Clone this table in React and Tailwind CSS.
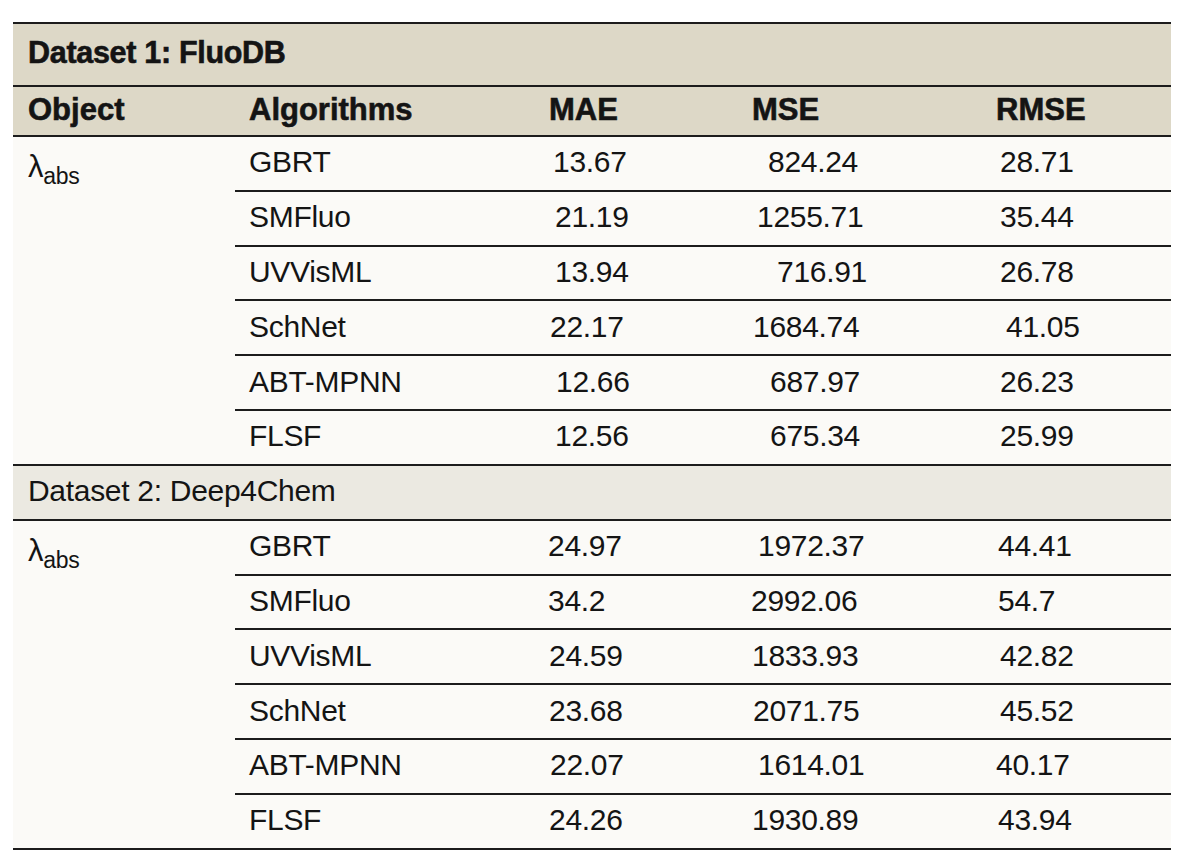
import React from "react";

const ds1 = [
  ["GBRT", "13.67", "pl-[19px]", "824.24", "pl-[30px]", "28.71", "pl-[18px]"],
  ["SMFluo", "21.19", "pl-[21px]", "1255.71", "pl-[19px]", "35.44", "pl-[18px]"],
  ["UVVisML", "13.94", "pl-[21px]", "716.91", "pl-[39px]", "26.78", "pl-[18px]"],
  ["SchNet", "22.17", "pl-[16px]", "1684.74", "pl-[15px]", "41.05", "pl-[24px]"],
  ["ABT-MPNN", "12.66", "pl-[22px]", "687.97", "pl-[32px]", "26.23", "pl-[18px]"],
  ["FLSF", "12.56", "pl-[21px]", "675.34", "pl-[32px]", "25.99", "pl-[18px]"],
];

const ds2 = [
  ["GBRT", "24.97", "pl-[14px]", "1972.37", "pl-[20px]", "44.41", "pl-[16px]"],
  ["SMFluo", "34.2", "pl-[14px]", "2992.06", "pl-[13px]", "54.7", "pl-[16px]"],
  ["UVVisML", "24.59", "pl-[15px]", "1833.93", "pl-[14px]", "42.82", "pl-[18px]"],
  ["SchNet", "23.68", "pl-[15px]", "2071.75", "pl-[15px]", "45.52", "pl-[18px]"],
  ["ABT-MPNN", "22.07", "pl-[16px]", "1614.01", "pl-[20px]", "40.17", "pl-[14px]"],
  ["FLSF", "24.26", "pl-[15px]", "1930.89", "pl-[14px]", "43.94", "pl-[16px]"],
];

function Lambda() {
  return (
    <span className="inline-flex items-baseline">
      <span className="text-[31px]">λ</span>
      <span className="relative top-[7px] text-[23px]">abs</span>
    </span>
  );
}

function Block({ rows }) {
  return (
    <div className="flex border-b-2 border-[#1c1c1c]">
      <div className="w-[222px] shrink-0 pl-[15px] pt-[14px]">
        <Lambda />
      </div>
      <div className="flex-1 flex flex-col">
        {rows.map((r, i) => (
          <div
            key={r[0]}
            className={
              "flex items-center pb-[2px] " +
              (i < rows.length - 1 ? "h-[54.8px] border-b-2 border-[#1c1c1c]" : "h-[52.8px]")
            }
          >
            <div className="w-[299px] shrink-0 pl-[14px]">{r[0]}</div>
            <div className={"w-[204px] shrink-0 " + r[2]}>{r[1]}</div>
            <div className={"w-[244px] shrink-0 " + r[4]}>{r[3]}</div>
            <div className={"flex-1 " + r[6]}>{r[5]}</div>
          </div>
        ))}
      </div>
    </div>
  );
}

export default function App() {
  return (
    <div className="w-[1188px] h-[856px] bg-white pt-[22px] px-[13px] text-[#141414] font-['Liberation_Sans',Arial,sans-serif] text-[30px] leading-none tracking-[-0.3px]">
      <div className="w-[1158px] bg-[#fbfaf7] border-t-2 border-[#1c1c1c]">
        <div className="h-[63px] bg-[#ddd8c7] border-b-2 border-[#1c1c1c] flex items-center pl-[15px] pb-[4px] font-bold text-[30.5px] [-webkit-text-stroke:0.6px_#141414]">
          Dataset 1: FluoDB
        </div>
        <div className="h-[50px] bg-[#ddd8c7] border-b-2 border-[#1c1c1c] flex items-center pb-[4px] font-bold text-[31px] tracking-[0px] [-webkit-text-stroke:0.6px_#141414]">
          <div className="w-[222px] shrink-0 pl-[15px]">Object</div>
          <div className="w-[299px] shrink-0 pl-[14px]">Algorithms</div>
          <div className="w-[204px] shrink-0 pl-[15px]">MAE</div>
          <div className="w-[244px] shrink-0 pl-[14px]">MSE</div>
          <div className="flex-1 pl-[14px]">RMSE</div>
        </div>
        <Block rows={ds1} />
        <div className="h-[55px] bg-[#ebe9e1] border-b-2 border-[#1c1c1c] flex items-center pl-[15px] pb-[3px]">
          Dataset 2: Deep4Chem
        </div>
        <Block rows={ds2} />
      </div>
    </div>
  );
}
